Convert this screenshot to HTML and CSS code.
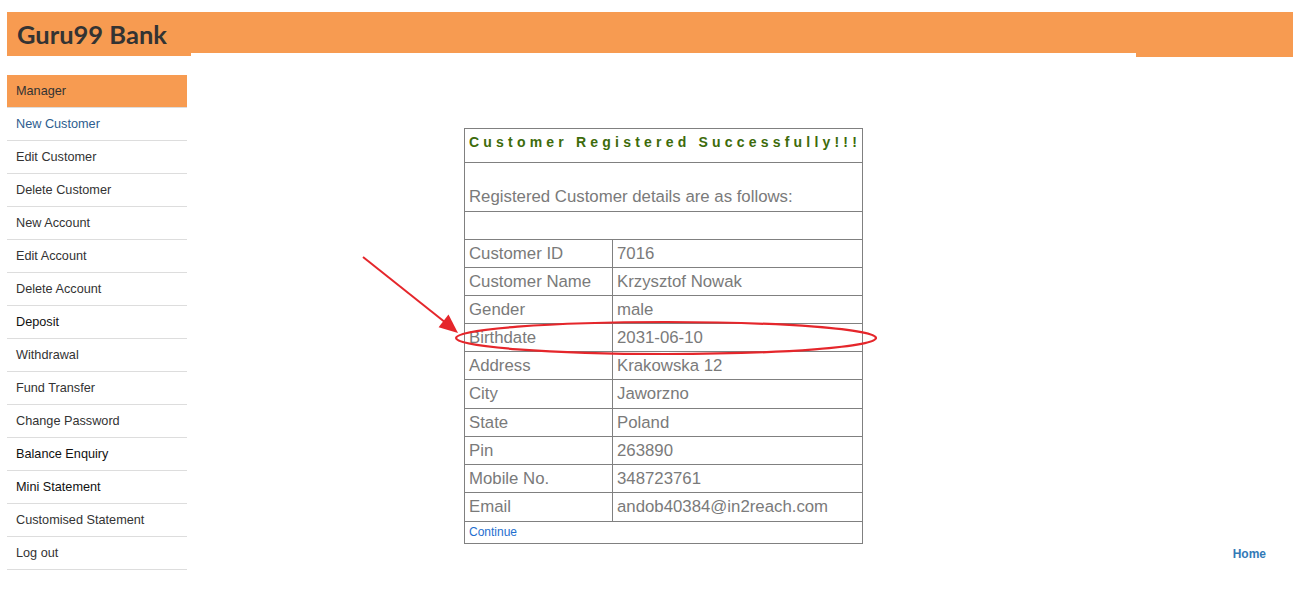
FILE: index.html
```html
<!DOCTYPE html>
<html lang="en">
<head>
<meta charset="utf-8">
<title>Guru99 Bank</title>
<link rel="stylesheet" href="styles.css">
</head>
<body>
<div class="page">
  <div class="logo">Guru99 Bank</div>
  <div class="bar-mid"></div>
  <div class="bar-right"></div>

  <nav class="sidebar">
    <ul class="menu">
      <li class="active">Manager</li>
      <li class="blue">New Customer</li>
      <li>Edit Customer</li>
      <li>Delete Customer</li>
      <li>New Account</li>
      <li>Edit Account</li>
      <li>Delete Account</li>
      <li class="dark">Deposit</li>
      <li>Withdrawal</li>
      <li>Fund Transfer</li>
      <li>Change Password</li>
      <li class="dark">Balance Enquiry</li>
      <li class="dark">Mini Statement</li>
      <li>Customised Statement</li>
      <li>Log out</li>
    </ul>
  </nav>

  <main class="main">
    <table class="details">
      <colgroup><col class="c1"><col class="c2"></colgroup>
      <tr><td colspan="2" class="title">Customer Registered Successfully!!!</td></tr>
      <tr><td colspan="2" class="intro">Registered Customer details are as follows:</td></tr>
      <tr><td colspan="2" class="blank"></td></tr>
      <tr><td>Customer ID</td><td>7016</td></tr>
      <tr><td>Customer Name</td><td>Krzysztof Nowak</td></tr>
      <tr><td>Gender</td><td>male</td></tr>
      <tr><td>Birthdate</td><td>2031-06-10</td></tr>
      <tr><td>Address</td><td>Krakowska 12</td></tr>
      <tr class="tall"><td>City</td><td>Jaworzno</td></tr>
      <tr><td>State</td><td>Poland</td></tr>
      <tr><td>Pin</td><td>263890</td></tr>
      <tr><td>Mobile No.</td><td>348723761</td></tr>
      <tr class="tall"><td>Email</td><td>andob40384@in2reach.com</td></tr>
      <tr><td colspan="2" class="cont"><a href="#">Continue</a></td></tr>
    </table>
  </main>

  <aside class="right">
    <a href="#" class="home">Home</a>
  </aside>
</div>

<svg class="annot" width="1293" height="595" viewBox="0 0 1293 595" xmlns="http://www.w3.org/2000/svg">
  <line x1="363" y1="257" x2="446" y2="323" stroke="#e5262b" stroke-width="2"/>
  <polygon points="458,333 448.5,314.6 438.6,327.2" fill="#e5262b"/>
  <ellipse cx="666" cy="338" rx="210" ry="16" fill="none" stroke="#e5262b" stroke-width="2.2"/>
</svg>
</body>
</html>
```
FILE: styles.css
```css
html, body {
  margin: 0;
  padding: 0;
  background: #fff;
}
body {
  font-family: "Liberation Sans", Arial, sans-serif;
  position: relative;
  width: 1293px;
  height: 595px;
  overflow: hidden;
}
.page {
  display: grid;
  grid-template-columns: 184px 945px 157px;
  grid-template-rows: 45px auto;
  padding: 12px 0 0 7px;
}
.logo {
  background: #f79b51;
  height: 44px;
  align-self: start;
  font-family: "Lato", "Open Sans", sans-serif;
  font-weight: 700;
  font-size: 25.5px;
  color: #333;
  line-height: 44px;
  padding-left: 10px;
  box-sizing: border-box;
}
.bar-mid {
  background: #f79b51;
  height: 41px;
  align-self: start;
}
.bar-right {
  background: #f79b51;
  height: 45px;
  align-self: start;
}
.sidebar {
  padding-top: 18px;
}
.menu {
  list-style: none;
  margin: 0;
  padding: 0;
  width: 180px;
}
.menu li {
  height: 32px;
  line-height: 32px;
  border-bottom: 1px solid #ddd;
  padding-left: 9px;
  font-size: 12.7px;
  color: #333;
}
.menu li.active {
  background: #f79b51;
  color: #333;
}
.menu li.blue {
  color: #2d5d8f;
}
.menu li.dark {
  color: #111;
}
.main {
  display: flex;
  justify-content: center;
  align-items: flex-start;
  padding-top: 71px;
}
.details {
  border-collapse: collapse;
  table-layout: fixed;
  width: 399px;
  border: 1px solid #808080;
  font-size: 16.8px;
  color: #7a7a7a;
}
.details col.c1 { width: 148px; }
.details td {
  border: 1px solid #808080;
  padding: 0 4px;
  line-height: 27px;
  white-space: nowrap;
  vertical-align: top;
}
.details tr.tall td {
  line-height: 28px;
}
.details td.title {
  font-size: 14px;
  font-weight: 700;
  color: #3d6b0b;
  letter-spacing: 4.2px;
  line-height: 25px;
  padding-top: 1px;
  padding-bottom: 7px;
}
.details td.intro {
  line-height: 20px;
  padding-top: 24px;
  padding-bottom: 4px;
}
.details td.blank {
  height: 27px;
  padding: 0;
}
.details td.cont {
  font-size: 12px;
  line-height: 18px;
  padding-top: 1px;
  padding-bottom: 2px;
}
.details td.cont a {
  color: #1f6fcf;
  text-decoration: none;
}
.right {
  display: flex;
  justify-content: flex-end;
  padding: 489px 27px 0 0;
}
.home {
  font-size: 12px;
  font-weight: 700;
  color: #337ab7;
  text-decoration: none;
  line-height: 17px;
}
.annot {
  position: absolute;
  left: 0;
  top: 0;
  pointer-events: none;
}
```
